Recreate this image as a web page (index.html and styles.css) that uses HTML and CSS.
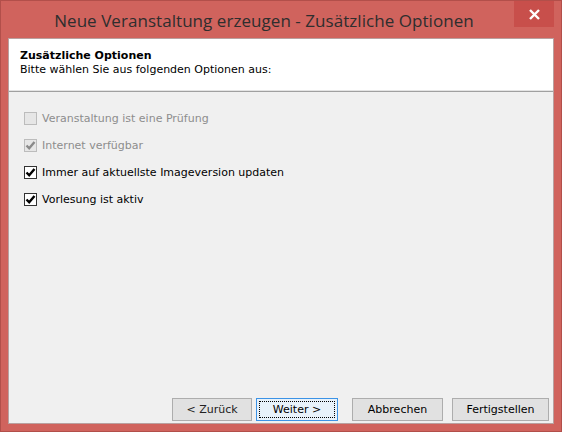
FILE: index.html
```html
<!DOCTYPE html>
<html>
<head>
<meta charset="utf-8">
<link rel="stylesheet" href="styles.css">
</head>
<body>
<div class="window">
  <div class="titlebar">
    <div class="title">Neue Veranstaltung erzeugen - Zusätzliche Optionen</div>
    <div class="close">
      <svg width="13" height="11" viewBox="0 0 13 11"><path d="M2 1 L11 10 M11 1 L2 10" stroke="#fff" stroke-width="2.4" fill="none"/></svg>
    </div>
  </div>
  <div class="client">
    <div class="header">
      <div class="h-title">Zusätzliche Optionen</div>
      <div class="h-sub">Bitte wählen Sie aus folgenden Optionen aus:</div>
    </div>
    <div class="content">
      <div class="opt disabled"><span class="box"></span><span>Veranstaltung ist eine Prüfung</span></div>
      <div class="opt disabled"><span class="box"><svg width="11" height="11" viewBox="0 0 11 11"><path d="M1.5 5.5 L4.2 8.3 L9.5 2" stroke="#8a8a8a" stroke-width="2.4" fill="none"/></svg></span><span>Internet verfügbar</span></div>
      <div class="opt"><span class="box"><svg width="11" height="11" viewBox="0 0 11 11"><path d="M1.5 5.5 L4.2 8.3 L9.5 2" stroke="#000" stroke-width="2.4" fill="none"/></svg></span><span>Immer auf aktuellste Imageversion updaten</span></div>
      <div class="opt"><span class="box"><svg width="11" height="11" viewBox="0 0 11 11"><path d="M1.5 5.5 L4.2 8.3 L9.5 2" stroke="#000" stroke-width="2.4" fill="none"/></svg></span><span>Vorlesung ist aktiv</span></div>
    </div>
    <div class="buttons">
      <button class="btn w-back">&lt; Zurück</button>
      <button class="btn default w-next"><span class="focus">Weiter &gt;</span></button>
      <button class="btn w-cancel">Abbrechen</button>
      <button class="btn w-finish">Fertigstellen</button>
    </div>
  </div>
</div>
</body>
</html>
```

FILE: styles.css
```css
html, body { margin: 0; padding: 0; }
body { width: 562px; height: 432px; overflow: hidden; font-family: "DejaVu Sans", Tahoma, sans-serif; font-size: 11px; }
.window {
  width: 562px; height: 432px; box-sizing: border-box;
  border: 1px solid #b24f4a;
  background: #d0635d;
  padding: 0 7px 7px 7px;
  display: flex; flex-direction: column;
}
.titlebar { height: 37px; flex: none; position: relative; display: flex; justify-content: center; align-items: center; }
.title {
  font-family: "Open Sans", "Noto Sans", sans-serif; font-size: 17px; color: #2e2e2e;
  margin-left: -34px; margin-top: 1px; letter-spacing: 0.05px;
}
.close {
  position: absolute; right: 0; top: 0; width: 40px; height: 26px;
  background: #c84f4b; display: flex; align-items: center; justify-content: center;
}
.client {
  flex: 1; background: #f0f0f0; border: 1px solid #b9a09f;
  display: flex; flex-direction: column;
}
.header {
  background: #fff; height: 52px; box-sizing: border-box;
  padding: 10px 0 0 11px;
  border-bottom: 1px solid #e4e4e4;
  box-shadow: 0 1px 0 #a0a0a0;
  margin-bottom: 1px;
}
.h-title { font-weight: bold; color: #000; line-height: 14px; }
.h-sub { color: #000; line-height: 14px; }
.content { flex: 1; padding: 19px 0 0 15px; display: flex; flex-direction: column; gap: 13px; }
.opt { display: flex; align-items: center; height: 14px; color: #000; }
.opt .box {
  width: 11px; height: 11px; border: 1px solid #333; background: #fff;
  margin-right: 5px; display: flex; align-items: center; justify-content: center; flex: none;
}
.opt.disabled { color: #8d8d8d; }
.opt.disabled .box { border-color: #bcbcbc; background: #e6e6e6; }
.buttons { display: flex; justify-content: flex-end; padding: 0 4px 2px 0; gap: 4px; }
.btn {
  height: 23px; font-family: "DejaVu Sans", Tahoma, sans-serif; font-size: 11px; color: #000;
  background: #e1e1e1; border: 1px solid #adadad; padding: 0; margin: 0;
}
.w-back { width: 80px; color: #222; }
.w-next { width: 82px; }
.w-cancel { width: 91px; margin-left: 10px; }
.w-finish { width: 97px; margin-left: 5px; }
.btn.default { border-color: #3c93e6; background: #e8f2fb; padding: 2px; }
.focus { display: flex; height: 100%; box-sizing: border-box; border: 1px dotted #000; align-items: center; justify-content: center; }
```
